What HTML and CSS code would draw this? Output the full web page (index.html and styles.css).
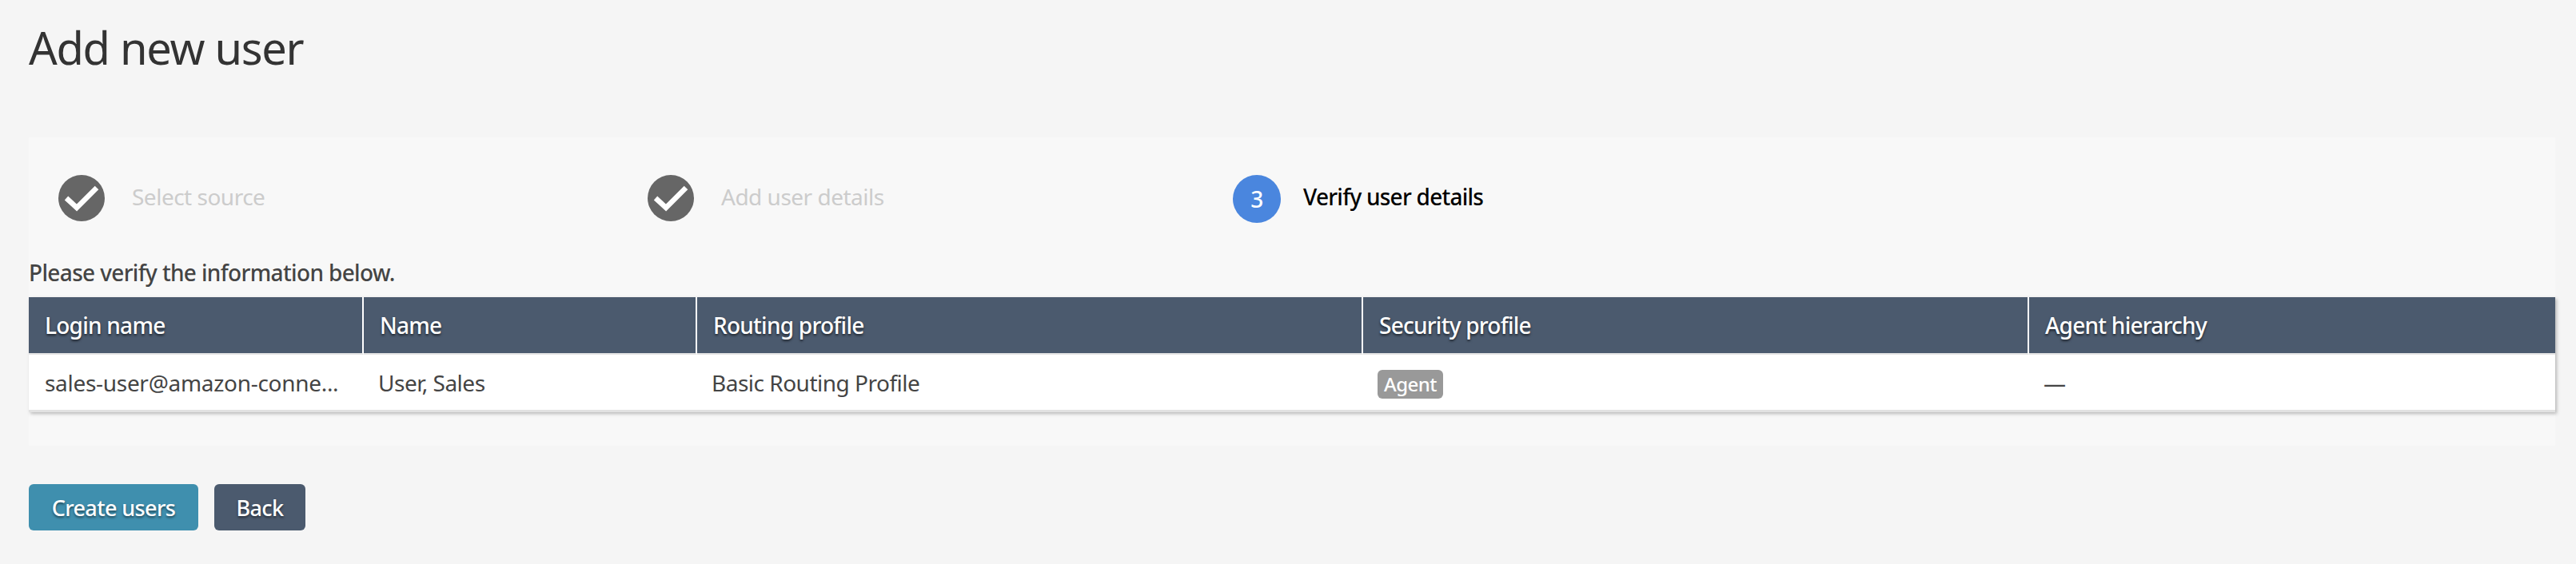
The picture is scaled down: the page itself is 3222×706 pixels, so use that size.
FILE: index.html
```html
<!doctype html>
<html lang="en">
<head>
    <meta charset="utf-8">
    <title>Add new user</title>
    <link rel="stylesheet" href="styles.css">
</head>
<body>
<div class="page">
    <h1 class="title">Add new user</h1>

    <div class="panel">
        <ul class="steps">
            <li class="step done">
                <span class="step-icon">
                    <svg viewBox="0 0 58 58" width="58" height="58"><path d="M10 29 L23 41 L48 16" fill="none" stroke="#fff" stroke-width="6.5"/></svg>
                </span>
                <span class="step-label">Select source</span>
            </li>
            <li class="step done">
                <span class="step-icon">
                    <svg viewBox="0 0 58 58" width="58" height="58"><path d="M10 29 L23 41 L48 16" fill="none" stroke="#fff" stroke-width="6.5"/></svg>
                </span>
                <span class="step-label">Add user details</span>
            </li>
            <li class="step current">
                <span class="step-icon">3</span>
                <span class="step-label">Verify user details</span>
            </li>
        </ul>

        <p class="hint">Please verify the information below.</p>

        <table class="users">
            <colgroup>
                <col class="col-login">
                <col class="col-name">
                <col class="col-profile">
                <col class="col-profile">
                <col>
            </colgroup>
            <thead>
                <tr>
                    <th>Login name</th>
                    <th>Name</th>
                    <th>Routing profile</th>
                    <th>Security profile</th>
                    <th>Agent hierarchy</th>
                </tr>
            </thead>
            <tbody>
                <tr>
                    <td>sales-user@amazon-conne...</td>
                    <td>User, Sales</td>
                    <td>Basic Routing Profile</td>
                    <td><span class="badge">Agent</span></td>
                    <td>—</td>
                </tr>
            </tbody>
        </table>
    </div>

    <div class="actions">
        <button class="btn btn-primary">Create users</button>
        <button class="btn btn-back">Back</button>
    </div>
</div>
</body>
</html>
```

FILE: styles.css
```css
* {
    padding: 0;
    margin: 0;
    list-style: none;
    border: 0;
    box-sizing: border-box;
}

html, body {
    height: 100%;
}

body {
    background: #f5f5f5;
    color: #444;
    font-family: "Noto Sans", "Liberation Sans", sans-serif;
    font-size: 28px;
    letter-spacing: -0.5px;
    overflow: hidden;
}

.page {
    padding: 0 26px 0 36px;
}

.title {
    height: 172px;
    padding-top: 21px;
    font-size: 56px;
    line-height: 76px;
    font-weight: 400;
    letter-spacing: -1.3px;
    color: #333;
}

.panel {
    height: 386px;
    background: #f8f8f8;
}

.steps {
    display: grid;
    grid-template-columns: 737px 732px 1fr;
    padding: 47px 0 0 37px;
    height: 142px;
}

.step {
    display: flex;
    align-items: flex-start;
    gap: 34px;
    height: 60px;
    line-height: 54px;
}

.step-icon {
    width: 58px;
    height: 58px;
    flex: none;
    border-radius: 50%;
    background: #666;
    color: #fff;
    text-align: center;
    line-height: 60px;
    font-weight: 500;
}

.step-icon svg {
    display: block;
}

.step-label {
    color: #ccc;
}

.current .step-icon {
    width: 60px;
    height: 60px;
    background: #4a86de;
}

.current {
    gap: 28px;
}

.current .step-label {
    color: #000;
    font-weight: 500;
    letter-spacing: -0.75px;
}

.hint {
    height: 58px;
    line-height: 54px;
    font-weight: 500;
    letter-spacing: -0.65px;
}

.users {
    width: 100%;
    table-layout: fixed;
    border-collapse: separate;
    border-spacing: 0;
    background: #fff;
    box-shadow: 2px 2px 4px rgba(0, 0, 0, .25);
}

.col-login {
    width: 419px;
}

.col-name {
    width: 417px;
}

.col-profile {
    width: 833px;
}

.users th {
    height: 72px;
    padding: 0 0 0 20px;
    background: #4b5a6e;
    color: #fff;
    font-weight: 500;
    letter-spacing: -0.75px;
    text-align: left;
    border-right: 2px solid #fff;
    border-bottom: 2px solid #e4e4e4;
    text-shadow: 0 2px 3px rgba(0, 0, 0, .6);
}

.users th:last-child {
    border-right: 0;
}

.users td {
    height: 72px;
    padding: 0 18px 0 18px;
    border-bottom: 3px solid #e2e2e2;
}

.users td:first-child {
    padding-left: 20px;
    letter-spacing: -0.3px;
}

.badge {
    display: inline-block;
    height: 36px;
    width: 82px;
    line-height: 35px;
    text-align: center;
    border-radius: 6px;
    background: #999;
    color: #fff;
    font-size: 24px;
    font-weight: 500;
    vertical-align: middle;
}

.actions {
    display: flex;
    gap: 20px;
    padding-top: 48px;
}

.btn {
    height: 58px;
    border-radius: 6px;
    color: #fff;
    font-family: inherit;
    font-size: 27px;
    font-weight: 500;
    letter-spacing: -0.6px;
    text-shadow: 0 2px 3px rgba(0, 0, 0, .5);
}

.btn-primary {
    width: 212px;
    background: #3f8fae;
}

.btn-back {
    width: 114px;
    background: #4b5a6e;
}
```
